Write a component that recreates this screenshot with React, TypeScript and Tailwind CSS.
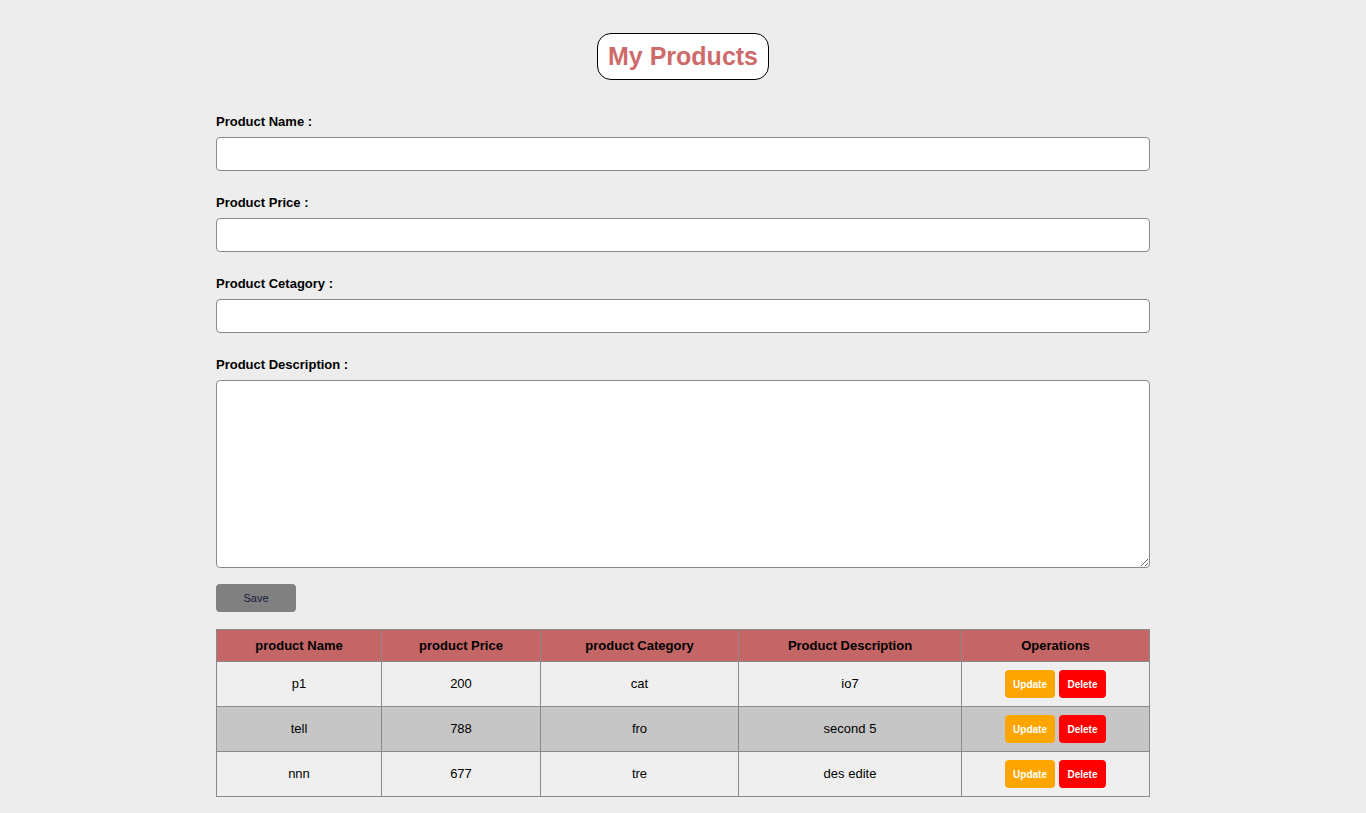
const products = [
  { id: 1, name: 'p1', price: '200', category: 'cat', description: 'io7' },
  { id: 2, name: 'tell', price: '788', category: 'fro', description: 'second 5' },
  { id: 3, name: 'nnn', price: '677', category: 'tre', description: 'des edite' },
];

const fields = ['Product Name :', 'Product Price :', 'Product Cetagory :'];

export default function App() {
  return (
    <div className="min-h-[813px] bg-[#ededed] font-['Liberation_Sans',Arial,sans-serif] text-black">
      <div className="mx-auto w-[934px] pt-[33px]">
        <div className="flex justify-center">
          <h1 className="h-[47px] w-[172px] rounded-[14px] border border-black bg-white text-center text-[25px] font-bold leading-[45px] text-[#cd6b6b]">
            My Products
          </h1>
        </div>

        <form className="mt-[34px]">
          {fields.map((label) => (
            <div key={label} className="mb-[24px]">
              <label className="block text-[13px] font-bold leading-[15px]">{label}</label>
              <input
                type="text"
                className="mt-[8px] block h-[34px] w-full rounded-[4px] border border-[#8a8a8a] bg-white px-2 outline-none"
              />
            </div>
          ))}
          <div>
            <label className="block text-[13px] font-bold leading-[15px]">Product Description :</label>
            <textarea className="mt-[8px] block h-[188px] w-full rounded-[4px] border border-[#8a8a8a] bg-white px-2 outline-none" />
          </div>
          <button
            type="button"
            className="mt-[16px] block h-[28px] w-[80px] rounded-[4px] bg-[#808080] text-[11px] text-[#1a1a3a]"
          >
            Save
          </button>
        </form>

        <table className="mt-[17px] w-full table-fixed border-collapse text-[13px]">
          <thead>
            <tr className="h-[32px] bg-[#c46666]">
              <th className="w-[165px] border border-[#8a8a8a] font-bold">product Name</th>
              <th className="w-[159px] border border-[#8a8a8a] font-bold">product Price</th>
              <th className="w-[198px] border border-[#8a8a8a] font-bold">product Category</th>
              <th className="w-[223px] border border-[#8a8a8a] font-bold">Product Description</th>
              <th className="border border-[#8a8a8a] font-bold">Operations</th>
            </tr>
          </thead>
          <tbody>
            {products.map((p, i) => (
              <tr key={p.id} className={`h-[45px] text-center ${i % 2 === 1 ? 'bg-[#c6c6c6]' : 'bg-[#efefef]'}`}>
                <td className="border border-[#8a8a8a]">{p.name}</td>
                <td className="border border-[#8a8a8a]">{p.price}</td>
                <td className="border border-[#8a8a8a]">{p.category}</td>
                <td className="border border-[#8a8a8a]">{p.description}</td>
                <td className="border border-[#8a8a8a]">
                  <div className="flex justify-center gap-[4px]">
                    <button className="h-[28px] w-[50px] rounded-[4px] bg-[#ffa500] text-[10px] font-bold text-white">
                      Update
                    </button>
                    <button className="h-[28px] w-[47px] rounded-[4px] bg-[#ff0000] text-[10px] font-bold text-white">
                      Delete
                    </button>
                  </div>
                </td>
              </tr>
            ))}
          </tbody>
        </table>
      </div>
    </div>
  );
}
